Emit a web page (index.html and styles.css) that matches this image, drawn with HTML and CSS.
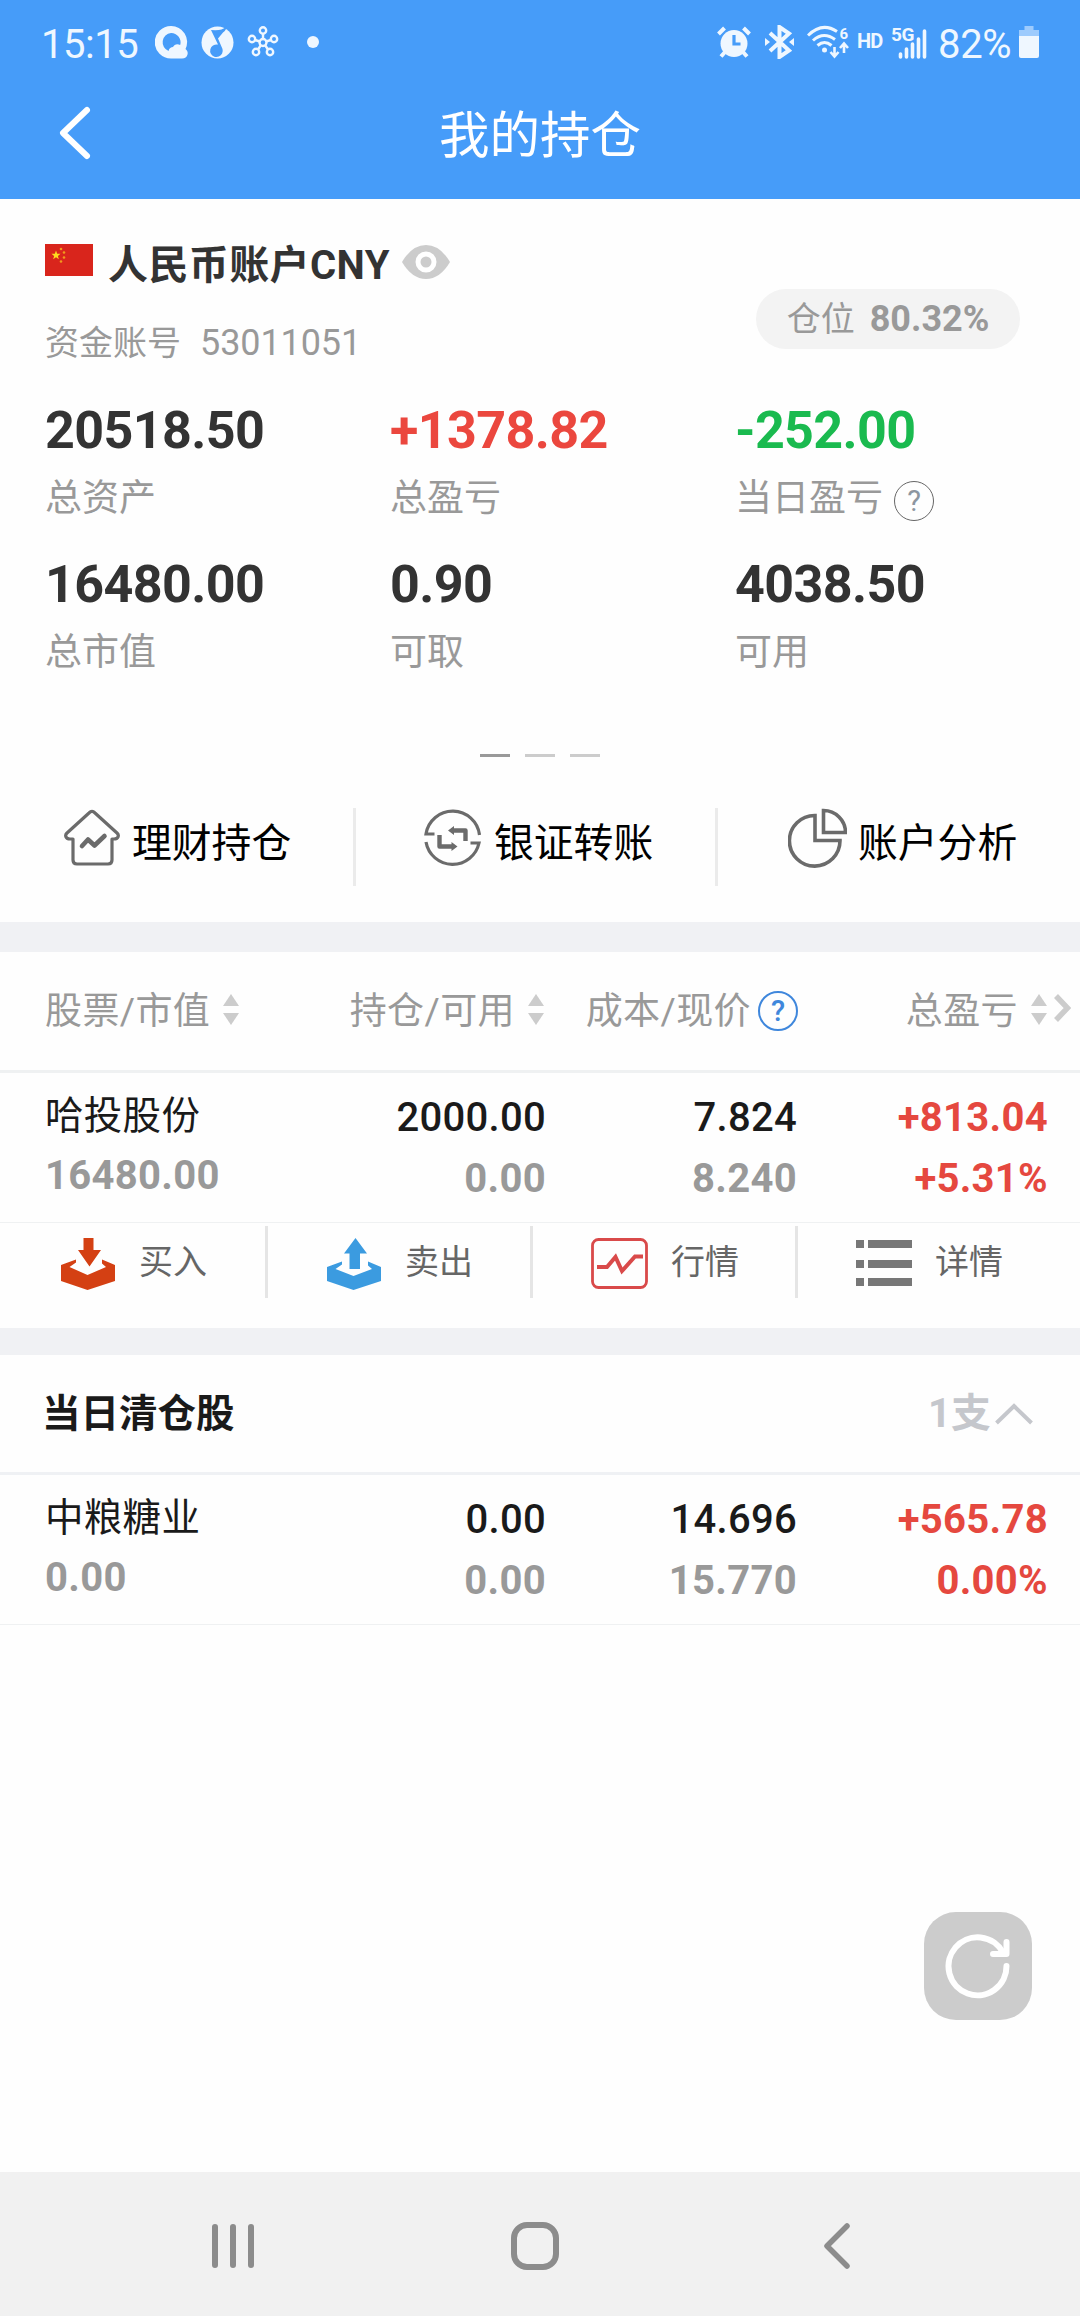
FILE: index.html
```
<!DOCTYPE html>
<html lang="zh-CN">
<head>
    <meta charset="UTF-8">
    <meta name="viewport" content="width=device-width, initial-scale=1.0">
    <title>我的持仓</title>
    <link rel="stylesheet" href="styles.css">
</head>
<body>
    <header class="top">
        <div class="status-bar">
            <span class="time">15:15</span>
            <div class="status-left">
                <svg width="33" height="33" viewBox="0 0 33 33">
                    <path d="M16 0a16 16 0 0 1 14.500 23c2 1.500 2.500 3.500 2 5.500-.6 2.500-2.500 4-5.500 4H16A16 16 0 0 1 16 0z" fill="#eff7ff"/>
                    <path d="M16 7a9.300 9.300 0 0 1 9.200 12c-3-1.700-6-.6-7.200 2-2 .1-3.700 1-4.500 3.900A9.300 9.300 0 0 1 16 7z" fill="#469cf9"/>
                </svg>
                <svg width="33" height="33" viewBox="0 0 33 33">
                    <circle cx="16.500" cy="16.500" r="16" fill="#eff7ff"/>
                    <path d="M10 4q7 .5 10.500-.5T25.500 0q0 4-3.500 6.500L17 12.500l4.500 10.500a6.300 6.300 0 1 1-9.500-3.500q2.500-1.500 5-1z" fill="#469cf9"/>
                </svg>
                <svg width="32" height="32" viewBox="0 0 32 32" fill="none" stroke="#eff7ff" stroke-width="2.400">
                    <circle cx="16" cy="16.500" r="3.500"/>
                    <circle cx="16" cy="4.500" r="3.200"/>
                    <circle cx="5" cy="13" r="3.200"/>
                    <circle cx="27" cy="13" r="3.200"/>
                    <circle cx="9" cy="26" r="3.200"/>
                    <circle cx="23" cy="26" r="3.200"/>
                    <path d="M16 7.500v6M8 14l5 1.500M24 14l-5 1.500M11 23.500l3-4.500M21 23.500L18 19"/>
                </svg>
                <span class="status-dot"></span>
            </div>
            <div class="status-right">
                <svg class="ic-alarm" width="34" height="32" viewBox="0 0 34 32" fill="none" stroke="#eff7ff">
                    <circle cx="17" cy="17.500" r="13.500" fill="#eff7ff" stroke="none"/>
                    <path d="M1.500 8l6-6M26.500 2l6 6M8 26l-4 4.500M26 26l4 4.500" stroke-width="4"/>
                    <path d="M17 9v9h6.500" stroke="#469cf9" stroke-width="3.200"/>
                </svg>
                <svg class="ic-bt" width="29" height="34" viewBox="0 0 29 34">
                    <path d="M5 8l19 17.500L14.500 32V2L24 8.500 5 26" fill="none" stroke="#eff7ff" stroke-width="4"/>
                    <path d="M0 13l5 4-5 4zM29 13l-5 4 5 4z" fill="#eff7ff"/>
                </svg>
                <svg class="ic-wifi" width="42" height="34" viewBox="0 0 42 34" fill="none" stroke="#eff7ff" stroke-width="3">
                    <path d="M1 10.500Q15-3.500 30 6.500M6 15.500q10.500-9.500 22-1M10.500 20.500q7-6 14 0"/>
                    <circle cx="17.500" cy="25" r="2.500" fill="#eff7ff" stroke="none"/>
                    <path d="M27.500 22v9M23.500 27l4 4.500 4-4.500M37 28v-9M33 23l4-4.500 4 4.500" stroke-width="2.600"/>
                    <text x="32.500" y="13.500" class="wifi-num">6</text>
                </svg>
                <span class="hd">HD</span>
                <svg class="ic-signal" width="39" height="38" viewBox="-2 -5 39 38">
                    <g stroke="#eff7ff" stroke-width="3.600" stroke-linecap="round">
                        <path d="M9.500 28v3M15.500 23v8M21.500 18v13M27.500 13v18M33.500 5v26"/>
                    </g>
                    <text x="0" y="15" class="net-type">5G</text>
                </svg>
                <span class="percent">82%</span>
                <svg class="ic-battery" width="20" height="32" viewBox="0 0 20 32">
                    <path d="M5.500 0h9v4H20v7H0V4h5.500z" fill="#9dcbfd"/>
                    <path d="M0 10h20v20q0 2-2 2H2q-2 0-2-2z" fill="#eff7ff"/>
                </svg>
            </div>
        </div>
        <div class="title-bar">
            <svg class="back" width="34" height="56" viewBox="0 0 34 56">
                <path d="M29 5L5 28l24 23" fill="none" stroke="#fff" stroke-width="6" stroke-linecap="round" stroke-linejoin="round"/>
            </svg>
            <h1>我的持仓</h1>
        </div>
    </header>

    <section class="account">
        <div class="account-head">
            <div>
                <div class="account-name">
                    <svg class="flag" width="48" height="32" viewBox="0 0 48 32">
                        <rect width="48" height="32" fill="#d9251c"/>
                        <path d="M11 6.500l1.200 3.200 3.300.1-2.600 2.100.9 3.300-2.800-1.900-2.800 1.900.9-3.300L6.500 9.800l3.300-.1z" fill="#fddb1e"/>
                        <g fill="#f19a1c">
                            <circle cx="16" cy="5" r="1.300"/>
                            <circle cx="19" cy="8.500" r="1.300"/>
                            <circle cx="19" cy="13.500" r="1.300"/>
                            <circle cx="16" cy="17.500" r="1.300"/>
                        </g>
                    </svg>
                    <span class="name">人民币账户CNY</span>
                    <svg class="eye" width="48" height="36" viewBox="0 0 48 36">
                        <path d="M0 18Q10 1 24 1t24 17Q38 35 24 35T0 18z" fill="#ccc"/>
                        <circle cx="24" cy="18" r="8" fill="#ccc" stroke="#fff" stroke-width="5"/>
                    </svg>
                </div>
                <div class="account-no"><span>资金账号</span><span class="no">53011051</span></div>
            </div>
            <div class="ratio"><span>仓位</span><b>80.32%</b></div>
        </div>

        <div class="stats">
            <div class="stat">
                <strong>20518.50</strong>
                <span>总资产</span>
            </div>
            <div class="stat">
                <strong class="up">+1378.82</strong>
                <span>总盈亏</span>
            </div>
            <div class="stat">
                <strong class="down">-252.00</strong>
                <span>当日盈亏<i class="help">?</i></span>
            </div>
            <div class="stat">
                <strong>16480.00</strong>
                <span>总市值</span>
            </div>
            <div class="stat">
                <strong>0.90</strong>
                <span>可取</span>
            </div>
            <div class="stat">
                <strong>4038.50</strong>
                <span>可用</span>
            </div>
        </div>

        <div class="pager">
            <i class="active"></i><i></i><i></i>
        </div>

        <nav class="quick">
            <a class="quick-item">
                <svg width="56" height="60" viewBox="0 0 56 60" fill="none" stroke="#6b6b6b" stroke-width="3.200" stroke-linecap="round" stroke-linejoin="round">
                    <path d="M25 5q3-3 6 0l22 20q2 2 1 4t-4 2h-2v21q0 4-4 4H13q-4 0-4-4V31H6q-3 0-4-2t1-4z"/>
                    <path d="M18 38l6-6.500 6.500 6 10-9.500" stroke-width="4.600"/>
                </svg>
                <span>理财持仓</span>
            </a>
            <a class="quick-item">
                <svg width="57" height="60" viewBox="0 0 57 60" fill="none" stroke="#6b6b6b" stroke-width="3.200">
                    <path d="M10.500 26H2A27 27 0 0 1 55.500 27M46.500 35H55A27 27 0 0 1 2 34"/>
                    <path d="M28 22.500h13.500V33M29 38.500H15.500V27" stroke-width="4.400" stroke-linejoin="round"/>
                    <path d="M30 18l-6 4.500 6 4.500zM27.500 34l6 4.500-6 4.500z" fill="#6b6b6b" stroke="none"/>
                </svg>
                <span>银证转账</span>
            </a>
            <a class="quick-item">
                <svg width="59" height="60" viewBox="0 0 59 60" fill="none" stroke="#6b6b6b" stroke-width="3.600">
                    <path d="M27 7.500v25h25A25.300 25.300 0 1 1 27 7.500z"/>
                    <path d="M35.500 2.500v22h22a22 22 0 0 0-22-22z"/>
                </svg>
                <span>账户分析</span>
            </a>
        </nav>
    </section>

    <section class="holdings">
        <div class="table-head">
            <div class="th"><span>股票/市值</span><i class="sort"></i></div>
            <div class="th"><span>持仓/可用</span><i class="sort"></i></div>
            <div class="th"><span>成本/现价</span><i class="help blue">?</i></div>
            <div class="th"><span>总盈亏</span><i class="sort"></i>
                <svg class="more" width="17" height="28" viewBox="0 0 17 28">
                    <path d="M2 2l11.500 12L2 26" fill="none" stroke="#ccc" stroke-width="5.500"/>
                </svg>
            </div>
        </div>

        <div class="row">
            <div class="cell stock"><span>哈投股份</span><b>16480.00</b></div>
            <div class="cell"><span>2000.00</span><b>0.00</b></div>
            <div class="cell"><span>7.824</span><b>8.240</b></div>
            <div class="cell profit"><span>+813.04</span><b>+5.31%</b></div>
        </div>

        <div class="actions">
            <a class="action">
                <svg width="54" height="52" viewBox="0 0 54 52" fill="#d44013">
                    <path d="M22.500 0h10v12H40L28.500 28.500 17 12h5.500z"/>
                    <path d="M0 27l15-5.500v3L8.500 29 26.500 37 45 29l-4-3.500v-4L54 27v16L26.500 52 0 43z"/>
                </svg>
                <span>买入</span>
            </a>
            <a class="action">
                <svg width="54" height="52" viewBox="0 0 54 52" fill="#3b9be0">
                    <path d="M28.500 0L40 15.500h-7V31H22.500V15.500H17z"/>
                    <path d="M0 29l15-5.500v3L8.500 31 26.500 38 45 31l-4-3.500v-4L54 29v14L26.500 52 0 43z"/>
                </svg>
                <span>卖出</span>
            </a>
            <a class="action">
                <svg width="57" height="52" viewBox="0 0 57 52" fill="none" stroke="#d94a4a">
                    <rect x="1.500" y="1.500" width="54" height="48" rx="6" stroke-width="2.800"/>
                    <path d="M6 29h10l8.500-10L31 33l13-14.500h8" stroke-width="4"/>
                </svg>
                <span>行情</span>
            </a>
            <a class="action">
                <svg width="56" height="52" viewBox="0 0 56 52" fill="#777">
                    <path d="M0 2h8v8H0zM12 2h44v8H12zM0 22h8v8H0zM12 22h44v8H12zM0 40h8v8H0zM12 40h44v8H12z"/>
                </svg>
                <span>详情</span>
            </a>
        </div>
    </section>

    <section class="cleared">
        <div class="section-head">
            <h2>当日清仓股</h2>
            <span class="count">1支
                <svg width="38" height="22" viewBox="0 0 38 22">
                    <path d="M1.500 20L19 3l17.500 17" fill="none" stroke="#c5c7cc" stroke-width="4"/>
                </svg>
            </span>
        </div>
        <div class="row">
            <div class="cell stock"><span>中粮糖业</span><b>0.00</b></div>
            <div class="cell"><span>0.00</span><b>0.00</b></div>
            <div class="cell"><span>14.696</span><b>15.770</b></div>
            <div class="cell profit"><span>+565.78</span><b>0.00%</b></div>
        </div>
    </section>

    <button class="refresh" type="button" aria-label="刷新">
        <svg width="108" height="108" viewBox="0 0 108 108" fill="none" stroke="#fff" stroke-width="6" stroke-linecap="round" stroke-linejoin="round">
            <path d="M82.500 54A29 29 0 1 1 79 40.500"/>
            <path d="M82.500 30v12H69"/>
        </svg>
    </button>

    <footer class="nav-bar">
        <svg width="44" height="48" viewBox="0 0 44 48" stroke="#8c8c8c" stroke-width="6" stroke-linecap="round">
            <path d="M4 5v38M22 5v38M40 5v38"/>
        </svg>
        <svg class="home" width="48" height="48" viewBox="0 0 48 48" fill="none" stroke="#8c8c8c" stroke-width="6">
            <rect x="3" y="3" width="42" height="42" rx="13"/>
        </svg>
        <svg width="28" height="48" viewBox="0 0 28 48" fill="none" stroke="#8c8c8c" stroke-width="5.500" stroke-linecap="round" stroke-linejoin="round">
            <path d="M24 4L4 24l20 20"/>
        </svg>
    </footer>
</body>
</html>
```

FILE: styles.css
```
* {
    margin: 0;
    padding: 0;
    box-sizing: border-box;
}

body {
    position: relative;
    display: flex;
    flex-direction: column;
    min-height: 2316px;
    background-color: #fefefe;
    color: #1a1a1a;
    font-family: Roboto, "Noto Sans CJK SC", sans-serif;
}

svg {
    display: block;
    flex: none;
}

i {
    font-style: normal;
}

/* Header */
.top {
    height: 199px;
    background-color: #469cf9;
    color: #fff;
}

.status-bar {
    display: flex;
    align-items: center;
    height: 88px;
    padding: 1px 41px 0 41px;
    color: #eff7ff;
    font-size: 40px;
    line-height: 48px;
}

.time {
    width: 99px;
    letter-spacing: -0.5px;
}

.status-left,
.status-right {
    display: flex;
    align-items: center;
}

.status-left {
    gap: 13px;
    margin-left: 15px;
}

.status-left svg,
.status-right svg {
    margin-bottom: 5px;
}

.status-dot {
    width: 12px;
    height: 12px;
    margin: 0 0 5px 15px;
    border-radius: 50%;
    background-color: #eff7ff;
}

.status-right {
    margin-left: auto;
}

.ic-bt {
    margin-left: 14px;
}

.ic-wifi {
    margin-left: 13px;
}

.wifi-num {
    fill: #eff7ff;
    stroke: none;
    font-size: 15px;
    font-weight: 700;
}

.hd {
    width: 28px;
    margin: 0 0 8px 8px;
    font-size: 20px;
    font-weight: 700;
    line-height: 24px;
    letter-spacing: -0.8px;
}

.status-right .ic-signal {
    margin: 0 0 10px 4px;
}

.net-type {
    fill: #eff7ff;
    stroke: #469cf9;
    stroke-width: 1px;
    paint-order: stroke;
    font-size: 19px;
    font-weight: 700;
    letter-spacing: -0.5px;
}

.percent {
    width: 75px;
    margin-left: 10px;
    letter-spacing: -0.3px;
}

.ic-battery {
    margin-left: 6px;
}

.title-bar {
    display: grid;
    grid-template-columns: 200px 1fr 200px;
    align-items: center;
    height: 111px;
    padding-bottom: 20px;
}

.back {
    margin: 0 0 2px 58px;
}

h1 {
    padding-top: 5px;
    text-align: center;
    font-size: 50.5px;
    font-weight: 400;
    line-height: 60px;
}

/* Account summary */
.account {
    height: 723px;
}

.account-head {
    display: flex;
    justify-content: space-between;
    height: 165px;
    padding: 42px 60px 0 45px;
}

.account-name {
    display: flex;
    align-items: center;
    height: 48px;
    color: #333;
    font-size: 40px;
    font-weight: 700;
    line-height: 48px;
}

.name {
    padding-top: 2px;
    letter-spacing: 0.4px;
}

.flag {
    margin: 0 15px 10px 0;
}

.eye {
    margin: 0 0 6px 12px;
}

.account-no {
    margin-top: 32px;
    color: #999;
    font-size: 34px;
    line-height: 44px;
}

.account-no .no {
    margin-left: 19px;
    font-size: 36px;
    letter-spacing: -0.1px;
}

.ratio {
    display: flex;
    align-items: center;
    justify-content: center;
    gap: 15px;
    width: 264px;
    height: 60px;
    margin-top: 48px;
    border-radius: 30px;
    background-color: #f3f3f3;
    color: #999;
    font-size: 34px;
    line-height: 40px;
}

.ratio b {
    font-size: 36px;
}

.stats {
    display: grid;
    grid-template-columns: 345px 345px 1fr;
    row-gap: 33px;
    margin-top: 37px;
    padding-left: 45px;
}

.stat strong {
    display: block;
    color: #333;
    font-size: 52px;
    line-height: 60px;
    letter-spacing: -0.6px;
}

.stat span {
    display: flex;
    align-items: center;
    height: 44px;
    margin-top: 16px;
    margin-bottom: 1px;
    color: #999;
    font-size: 37px;
    line-height: 44px;
}

.stat .up {
    color: #eb473e;
}

.stat .down {
    color: #1aba4f;
}

.help {
    display: flex;
    align-items: center;
    justify-content: center;
    width: 40px;
    height: 40px;
    margin: 3px 0 0 11px;
    border: 1.5px solid #666;
    border-radius: 50%;
    color: #8d96a0;
    font-size: 29px;
    line-height: 36px;
}

.help.blue {
    margin: 0 0 0 7px;
    border: 2px solid #3f87dc;
    color: #3f87dc;
    font-weight: 500;
}

.pager {
    display: flex;
    justify-content: center;
    gap: 15px;
    margin-top: 78px;
}

.pager i {
    width: 30px;
    height: 3px;
    background-color: #ccc;
}

.pager .active {
    background-color: #999;
}

.quick {
    display: grid;
    grid-template-columns: 353px 362px 1fr;
    height: 78px;
    margin-top: 51px;
}

.quick-item {
    display: flex;
    align-items: center;
    gap: 12px;
    padding-left: 64px;
    color: #000;
    font-size: 39.8px;
    line-height: 48px;
}

.quick-item + .quick-item {
    gap: 13px;
    padding-left: 68px;
    border-left: 3px solid #ebebeb;
}

.quick-item:last-child {
    gap: 11px;
    padding-left: 70px;
}

.quick-item svg {
    margin-bottom: 18px;
}

.quick-item span {
    margin-bottom: 6px;
}

/* Positions */
.holdings {
    border-top: 30px solid #f0f1f4;
}

.table-head,
.row {
    display: grid;
    grid-template-columns: 254px 247px 251px 251px;
    padding-left: 45px;
}

.table-head {
    grid-template-columns: 254px 245px 254px 273px;
    height: 121px;
    border-bottom: 3px solid #eff1f2;
    color: #999;
    font-size: 37px;
    line-height: 44px;
}

.th {
    display: flex;
    align-items: center;
    justify-content: flex-end;
}

.th span {
    padding-top: 1px;
    letter-spacing: 0.4px;
}

.th:first-child {
    justify-content: flex-start;
}

.sort {
    display: flex;
    flex-direction: column;
    gap: 7px;
    margin: 0 0 4px 13px;
}

.sort::before,
.sort::after {
    content: "";
    border: 8px solid transparent;
}

.sort::before {
    border-top: 0;
    border-bottom: 12px solid #ccc;
}

.sort::after {
    border-bottom: 0;
    border-top: 12px solid #ccc;
}

.more {
    margin: 0 0 6px 7px;
}

.row {
    height: 150px;
    padding-top: 14px;
    border-bottom: 1px solid #eff1f2;
}

.cell {
    text-align: right;
    font-size: 40px;
    line-height: 61px;
}

.cell span,
.cell b {
    display: block;
}

.cell span {
    font-weight: 500;
    letter-spacing: 0.3px;
}

.cell b {
    color: #999;
    letter-spacing: 0.3px;
}

.stock {
    text-align: left;
}

.stock span {
    font-size: 38.5px;
    font-weight: 400;
    line-height: 58px;
}

.stock b {
    line-height: 62px;
}

.profit span,
.profit b {
    color: #e5483f;
    font-weight: 700;
}

.actions {
    display: grid;
    grid-template-columns: 265px 265px 265px 1fr;
    height: 105px;
    padding: 3px 0 30px;
}

.action {
    display: flex;
    align-items: center;
    gap: 24px;
    padding-left: 61px;
    color: #666;
    font-size: 34px;
    line-height: 44px;
}

.action + .action {
    padding-left: 59px;
    border-left: 3px solid #e5e5e5;
}

.action + .action + .action {
    gap: 23px;
    padding-left: 58px;
}

.action svg {
    margin-top: 3px;
}

/* Cleared today */
.cleared {
    border-top: 27px solid #f0f1f4;
}

.section-head {
    display: flex;
    align-items: center;
    justify-content: space-between;
    height: 120px;
    padding: 0 47px 0 42px;
    border-bottom: 3px solid #eff1f4;
}

h2 {
    font-size: 38.5px;
    font-weight: 700;
    line-height: 48px;
}

.count {
    display: flex;
    align-items: center;
    gap: 4px;
    color: #c5c7cc;
    font-size: 40px;
    font-weight: 700;
    line-height: 48px;
}

.refresh {
    position: absolute;
    right: 48px;
    bottom: 296px;
    width: 108px;
    height: 108px;
    border: none;
    border-radius: 32px;
    background-color: #ccc;
}

/* System navigation */
.nav-bar {
    display: flex;
    align-items: center;
    justify-content: space-between;
    height: 144px;
    margin-top: auto;
    padding: 4px 229px 0 211px;
    background-color: #f1f1f1;
}

.home {
    margin-right: 8px;
}
```
